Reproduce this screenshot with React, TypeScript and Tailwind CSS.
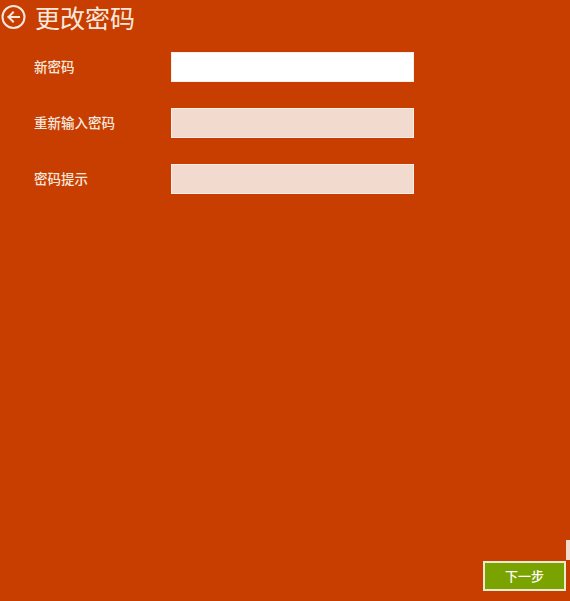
import React from "react";

export default function App() {
  const rows = [
    { label: "新密码", active: true },
    { label: "重新输入密码", active: false },
    { label: "密码提示", active: false },
  ];
  return (
    <div
      className="relative w-[570px] h-[601px] overflow-hidden bg-[#c83e00] text-[#f7e8df]"
      style={{ fontFamily: '"Noto Sans CJK SC", "Noto Sans", sans-serif' }}
    >
      <div className="flex items-center h-[32px] pt-[1px] pl-[1px]">
        <svg width="26" height="26" viewBox="0 0 26 26" className="shrink-0">
          <circle cx="12.5" cy="13" r="11" fill="none" stroke="#f7e8df" strokeWidth="2" />
          <path d="M18 13 H7.5 M12 8.5 L7.5 13 L12 17.5" fill="none" stroke="#f7e8df" strokeWidth="2" strokeLinecap="square" />
        </svg>
        <span className="ml-[8px] text-[25px] leading-[30px]">更改密码</span>
      </div>
      <div className="flex flex-col gap-[26px] mt-[20px]">
        {rows.map((r) => (
          <div key={r.label} className="flex items-center h-[30px]">
            <span className="w-[171px] pl-[34px] text-[13.5px] leading-none font-medium">{r.label}</span>
            <div
              className={
                "w-[243px] h-[30px] border border-[#fbeee6] " +
                (r.active ? "bg-white" : "bg-[#f3dacf]")
              }
            />
          </div>
        ))}
      </div>
      <div className="absolute right-0 top-[540px] w-[4px] h-[20px] bg-[#f3dacf]" />
      <div className="absolute right-[4px] top-[561px] w-[83px] h-[30px] bg-[#7aa300] border-2 border-[#e6eccf] flex items-center justify-center text-white text-[13px] font-medium">
        下一步
      </div>
    </div>
  );
}
